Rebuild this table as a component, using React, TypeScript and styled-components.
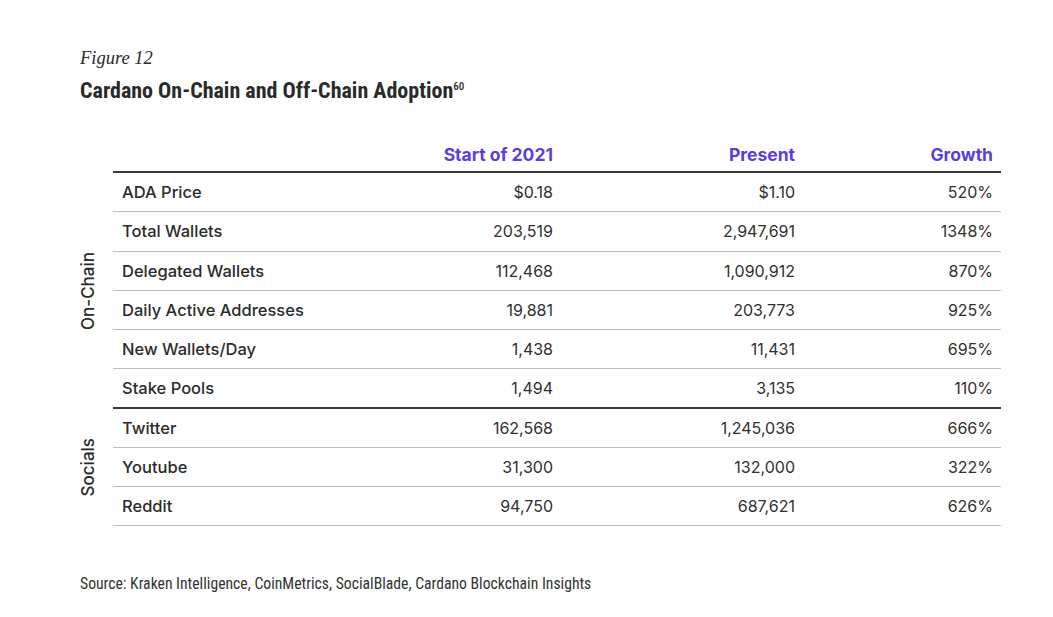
import React from "react";
import styled, { createGlobalStyle } from "styled-components";

const Global = createGlobalStyle`
  html, body { margin: 0; padding: 0; background: #ffffff; }
  body { font-family: Inter, "Noto Sans", sans-serif; color: #2e2e2e; }
`;

const Page = styled.div`
  width: 1053px;
  height: 617px;
  box-sizing: border-box;
  padding: 47px 52px 0 80px;
  display: flex;
  flex-direction: column;
`;

const FigureLabel = styled.div`
  font-family: "Liberation Serif", serif;
  font-style: italic;
  font-size: 18.5px;
  line-height: 22px;
  color: #2a2a2a;
`;

const Title = styled.h1`
  margin: 9px 0 0;
  font-family: "Roboto Condensed", "DejaVu Sans Condensed", Roboto, sans-serif;
  font-stretch: condensed;
  font-weight: 700;
  font-size: 22px;
  line-height: 26px;
  color: #2a2a2a;
  sup {
    font-size: 11px;
    vertical-align: 8px;
    line-height: 0;
    font-weight: 500;
  }
`;

const Table = styled.div`
  margin-top: 35px;
  display: grid;
  grid-template-columns: 33px 888px;
`;

const Spacer = styled.div``;

const Row = styled.div<{ $head?: boolean; $strong?: boolean }>`
  display: grid;
  grid-template-columns: 1fr 160px 242px 198px;
  align-items: center;
  box-sizing: border-box;
  height: ${(p) => (p.$head ? "34px" : "39.25px")};
  padding: ${(p) => (p.$head ? "0 8px 2px 9px" : "0 8px 0 9px")};
  border-bottom: ${(p) => (p.$strong ? "2px solid #3a3a3a" : "1px solid #bdbdbd")};
`;

const HeadCell = styled.div`
  text-align: right;
  font-weight: 700;
  font-size: 17.5px;
  color: #5741d9;
`;

const LabelCell = styled.div`
  font-weight: 500;
  font-size: 16.5px;
  color: #2b2b2b;
`;

const NumCell = styled.div`
  text-align: right;
  font-weight: 400;
  font-size: 16px;
  color: #2f2f2f;
`;

const Side = styled.div`
  display: flex;
  align-items: center;
  justify-content: center;
`;

const SideText = styled.span`
  writing-mode: vertical-rl;
  transform: rotate(180deg);
  font-weight: 500;
  font-size: 17px;
  color: #2b2b2b;
  margin-left: -18px;
`;

const Group = styled.div``;

const Source = styled.div`
  margin-top: 49px;
  font-family: "Roboto Condensed", "DejaVu Sans Condensed", Roboto, sans-serif;
  font-stretch: condensed;
  font-size: 15.7px;
  line-height: 18px;
  color: #333333;
`;

type R = [string, string, string, string];

const onChain: R[] = [
  ["ADA Price", "$0.18", "$1.10", "520%"],
  ["Total Wallets", "203,519", "2,947,691", "1348%"],
  ["Delegated Wallets", "112,468", "1,090,912", "870%"],
  ["Daily Active Addresses", "19,881", "203,773", "925%"],
  ["New Wallets/Day", "1,438", "11,431", "695%"],
  ["Stake Pools", "1,494", "3,135", "110%"],
];

const socials: R[] = [
  ["Twitter", "162,568", "1,245,036", "666%"],
  ["Youtube", "31,300", "132,000", "322%"],
  ["Reddit", "94,750", "687,621", "626%"],
];

const renderRows = (rows: R[], strongLast: boolean) =>
  rows.map((r, i) => (
    <Row key={r[0]} $strong={strongLast && i === rows.length - 1}>
      <LabelCell>{r[0]}</LabelCell>
      <NumCell>{r[1]}</NumCell>
      <NumCell>{r[2]}</NumCell>
      <NumCell>{r[3]}</NumCell>
    </Row>
  ));

export default function App() {
  return (
    <>
      <Global />
      <Page>
        <FigureLabel>Figure 12</FigureLabel>
        <Title>
          Cardano On-Chain and Off-Chain Adoption<sup>60</sup>
        </Title>
        <Table>
          <Spacer />
          <Row $head $strong>
            <span />
            <HeadCell>Start of 2021</HeadCell>
            <HeadCell>Present</HeadCell>
            <HeadCell>Growth</HeadCell>
          </Row>
          <Side>
            <SideText>On-Chain</SideText>
          </Side>
          <Group>{renderRows(onChain, true)}</Group>
          <Side>
            <SideText>Socials</SideText>
          </Side>
          <Group>{renderRows(socials, false)}</Group>
        </Table>
        <Source>Source: Kraken Intelligence, CoinMetrics, SocialBlade, Cardano Blockchain Insights</Source>
      </Page>
    </>
  );
}
